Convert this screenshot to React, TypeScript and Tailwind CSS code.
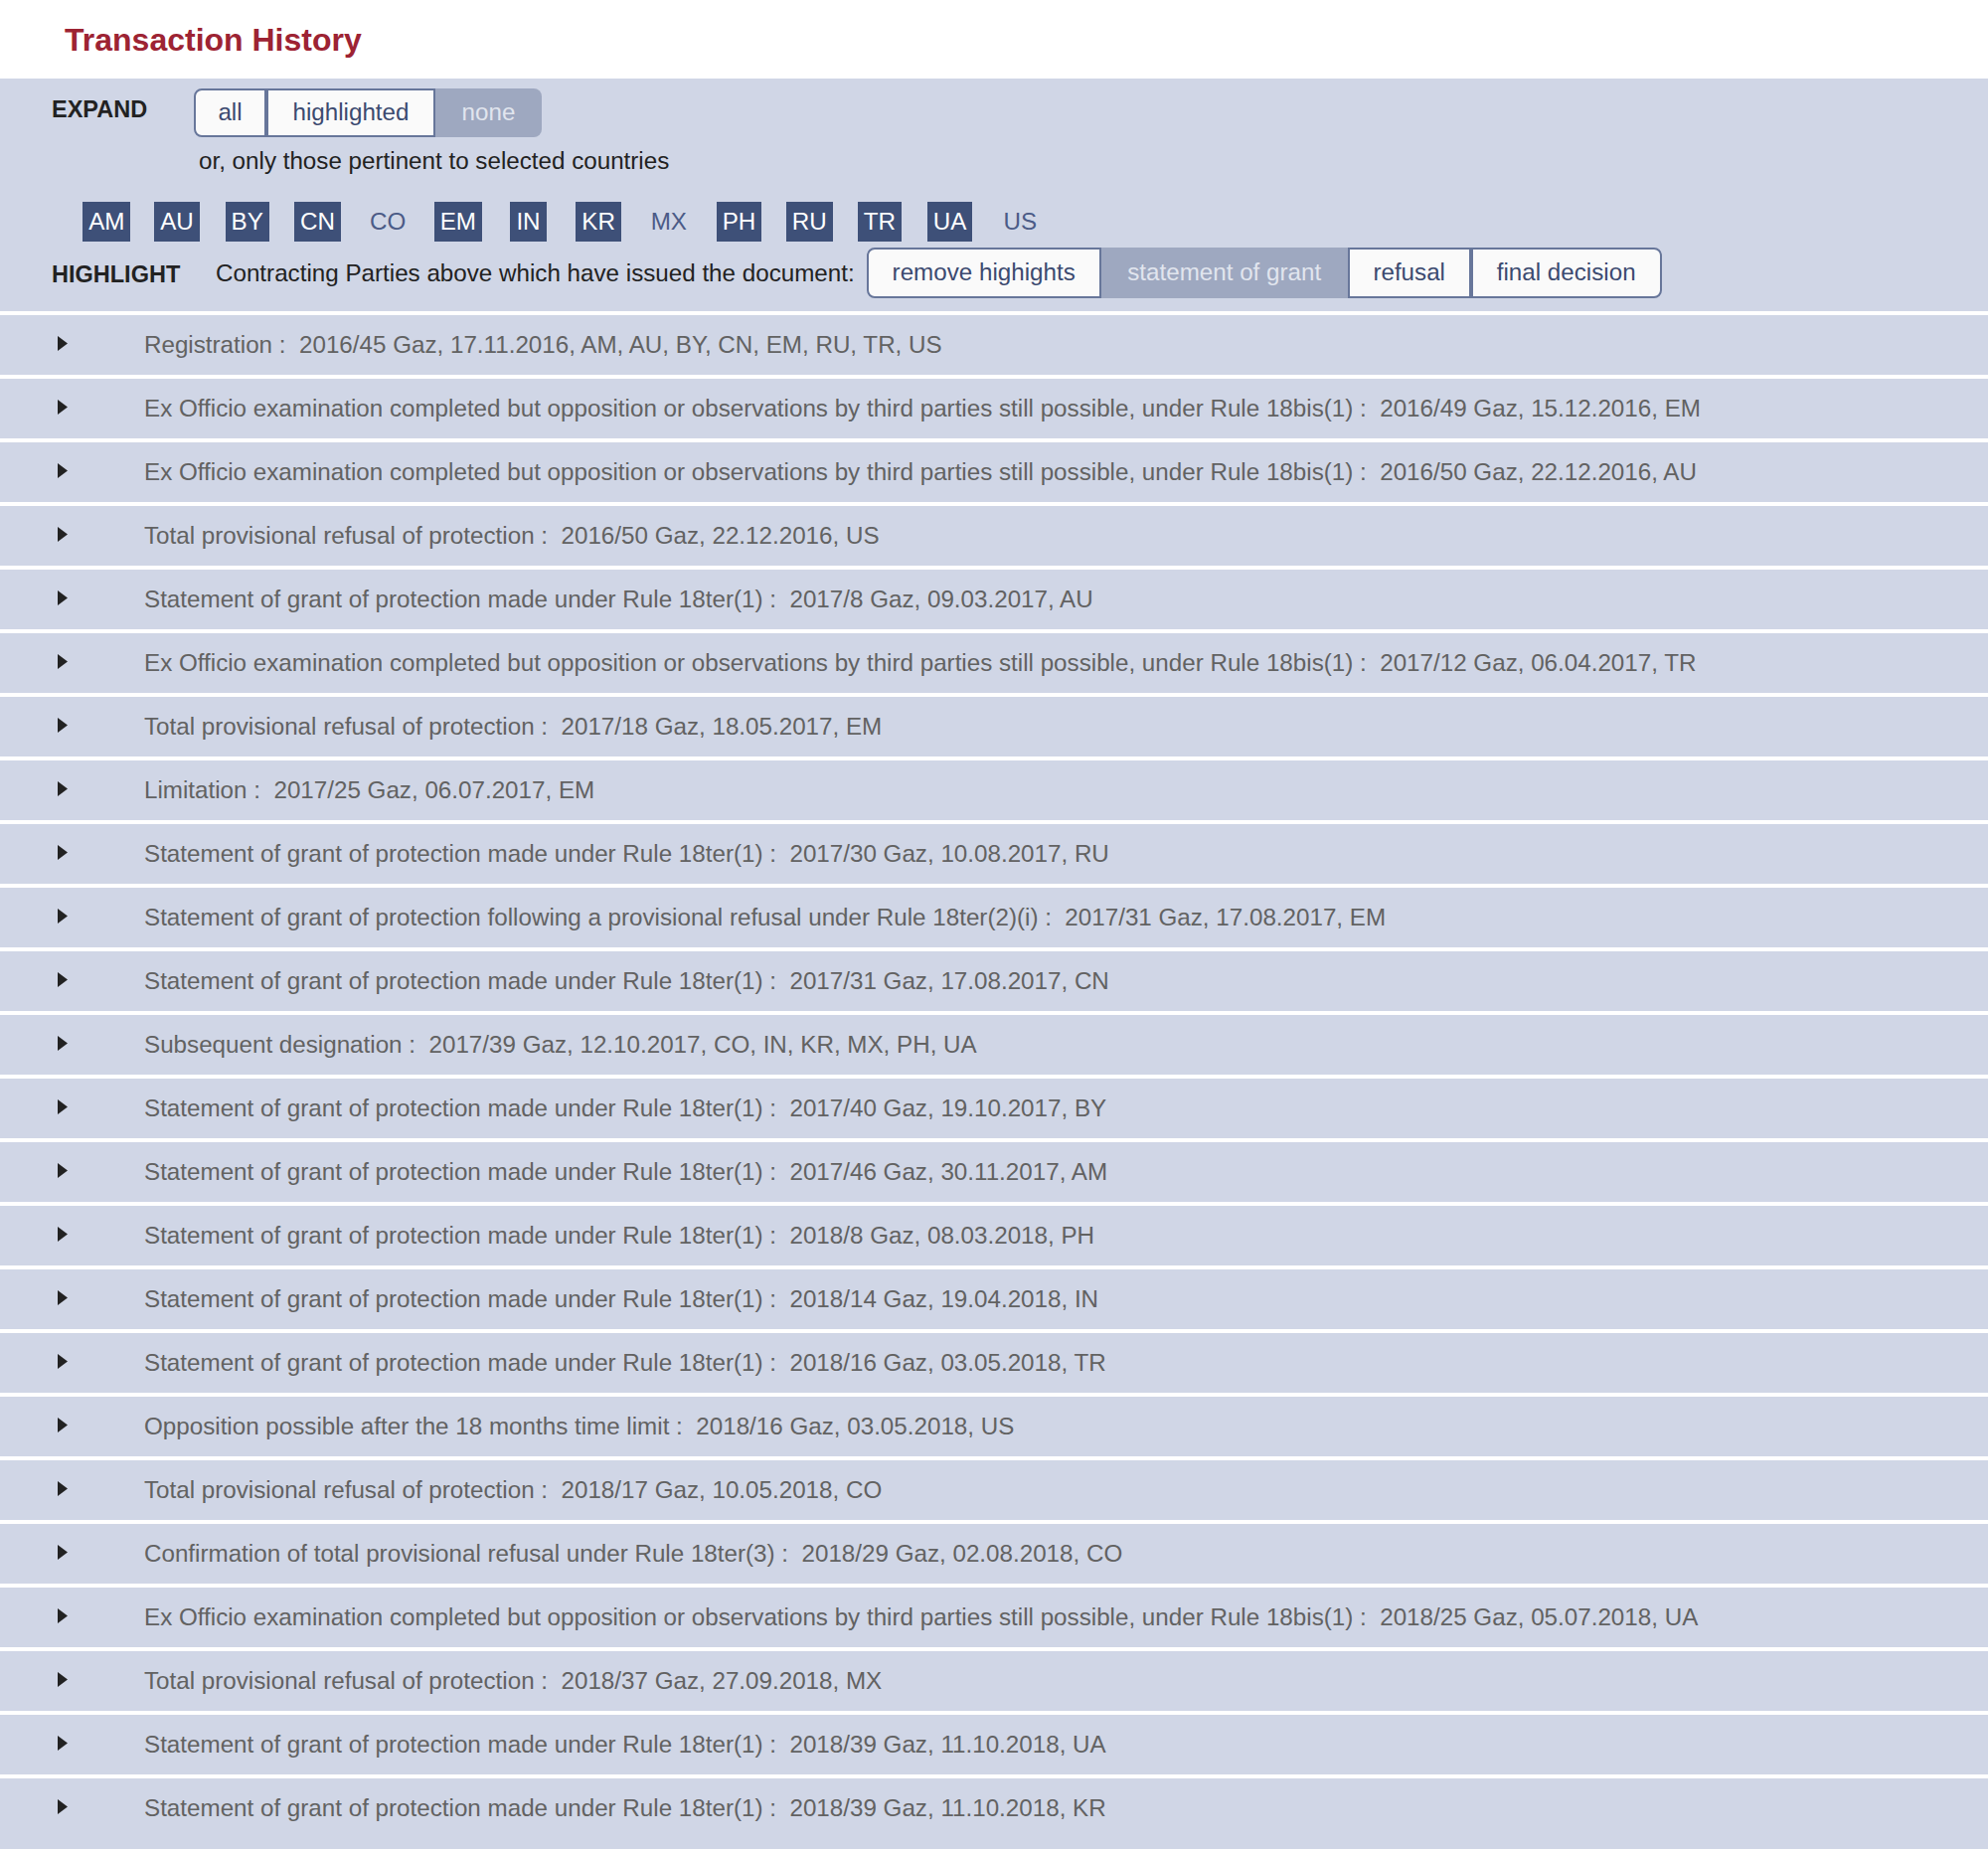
import React from "react";

const countries: { code: string; on: boolean }[] = [
  { code: "AM", on: true },
  { code: "AU", on: true },
  { code: "BY", on: true },
  { code: "CN", on: true },
  { code: "CO", on: false },
  { code: "EM", on: true },
  { code: "IN", on: true },
  { code: "KR", on: true },
  { code: "MX", on: false },
  { code: "PH", on: true },
  { code: "RU", on: true },
  { code: "TR", on: true },
  { code: "UA", on: true },
  { code: "US", on: false },
];

const EXO =
  "Ex Officio examination completed but opposition or observations by third parties still possible, under Rule 18bis(1)";
const SOG = "Statement of grant of protection made under Rule 18ter(1)";
const TPR = "Total provisional refusal of protection";

const rows: [string, string][] = [
  ["Registration", "2016/45 Gaz, 17.11.2016, AM, AU, BY, CN, EM, RU, TR, US"],
  [EXO, "2016/49 Gaz, 15.12.2016, EM"],
  [EXO, "2016/50 Gaz, 22.12.2016, AU"],
  [TPR, "2016/50 Gaz, 22.12.2016, US"],
  [SOG, "2017/8 Gaz, 09.03.2017, AU"],
  [EXO, "2017/12 Gaz, 06.04.2017, TR"],
  [TPR, "2017/18 Gaz, 18.05.2017, EM"],
  ["Limitation", "2017/25 Gaz, 06.07.2017, EM"],
  [SOG, "2017/30 Gaz, 10.08.2017, RU"],
  [
    "Statement of grant of protection following a provisional refusal under Rule 18ter(2)(i)",
    "2017/31 Gaz, 17.08.2017, EM",
  ],
  [SOG, "2017/31 Gaz, 17.08.2017, CN"],
  ["Subsequent designation", "2017/39 Gaz, 12.10.2017, CO, IN, KR, MX, PH, UA"],
  [SOG, "2017/40 Gaz, 19.10.2017, BY"],
  [SOG, "2017/46 Gaz, 30.11.2017, AM"],
  [SOG, "2018/8 Gaz, 08.03.2018, PH"],
  [SOG, "2018/14 Gaz, 19.04.2018, IN"],
  [SOG, "2018/16 Gaz, 03.05.2018, TR"],
  ["Opposition possible after the 18 months time limit", "2018/16 Gaz, 03.05.2018, US"],
  [TPR, "2018/17 Gaz, 10.05.2018, CO"],
  ["Confirmation of total provisional refusal under Rule 18ter(3)", "2018/29 Gaz, 02.08.2018, CO"],
  [EXO, "2018/25 Gaz, 05.07.2018, UA"],
  [TPR, "2018/37 Gaz, 27.09.2018, MX"],
  [SOG, "2018/39 Gaz, 11.10.2018, UA"],
  [SOG, "2018/39 Gaz, 11.10.2018, KR"],
];

function Triangle() {
  return (
    <svg width="10" height="15" viewBox="0 0 10 15" className="block">
      <polygon points="0,0 10,7.5 0,15" fill="#222222" />
    </svg>
  );
}

export default function App() {
  return (
    <div
      className="w-[2000px] min-h-[1860px] bg-white"
      style={{ fontFamily: '"Liberation Sans", Arial, Helvetica, sans-serif' }}
    >
      <div className="h-[79px] flex items-center pl-[65px]">
        <h1 className="text-[32px] leading-none font-bold text-[#9d2333]">Transaction History</h1>
      </div>

      <div className="bg-[#d0d6e6] pt-[10px] pb-[13px]">
        <div className="flex items-start pl-[52px]">
          <div className="w-[143px] mt-[10px] text-[23.5px] leading-none font-bold text-[#222]">EXPAND</div>
          <div className="flex h-[49px] text-[24.2px]">
            <div className="w-[73px] flex items-center justify-center bg-[#fafafa] border-2 border-[#67769a] rounded-l-[8px] text-[#3c4a70]">
              all
            </div>
            <div className="w-[170px] flex items-center justify-center bg-[#fafafa] border-2 border-[#67769a] text-[#3c4a70]">
              highlighted
            </div>
            <div className="w-[107px] flex items-center justify-center bg-[#9ea8c0] rounded-r-[8px] text-[#e1e5ee]">
              none
            </div>
          </div>
        </div>
        <div className="pl-[200px] mt-[10px] text-[24.2px] leading-[28px] text-[#222]">
          or, only those pertinent to selected countries
        </div>
        <div className="flex pl-[72px] mt-[27px]">
          {countries.map((c) => (
            <div key={c.code} className="w-[70.7px] flex justify-center">
              <div
                className={
                  c.on
                    ? "h-[40px] px-[6px] flex items-center bg-[#3e5078] text-white text-[24.2px]"
                    : "h-[40px] px-[6px] flex items-center text-[#4b5b87] text-[24.2px]"
                }
              >
                {c.code}
              </div>
            </div>
          ))}
        </div>
        <div className="flex items-center pl-[52px] mt-[6px]">
          <div className="w-[165px] mt-[4px] text-[23.5px] leading-none font-bold text-[#222]">HIGHLIGHT</div>
          <div className="text-[24.2px] leading-[28px] text-[#222] mr-[12px]">
            Contracting Parties above which have issued the document:
          </div>
          <div className="flex h-[51px] text-[24.2px]">
            <div className="w-[236px] flex items-center justify-center bg-[#fafafa] border-2 border-[#67769a] rounded-l-[8px] text-[#3c4a70]">
              remove highights
            </div>
            <div className="w-[248px] flex items-center justify-center bg-[#9ea8c0] text-[#e1e5ee]">
              statement of grant
            </div>
            <div className="w-[124px] flex items-center justify-center bg-[#fafafa] border-2 border-[#67769a] text-[#3c4a70]">
              refusal
            </div>
            <div className="w-[192px] flex items-center justify-center bg-[#fafafa] border-2 border-[#67769a] rounded-r-[8px] text-[#3c4a70]">
              final decision
            </div>
          </div>
        </div>
      </div>

      <div className="flex flex-col">
        {rows.map(([label, detail], i) => (
          <div key={i} className="mt-[4px] h-[60px] bg-[#d0d6e6] flex items-center">
            <div className="w-[145px] pl-[58px] flex items-center -mt-[3px]">
              <Triangle />
            </div>
            <div className="text-[24.2px] leading-[28px] text-[#626262] whitespace-nowrap">
              {label} :{"\u00a0"} {detail}
            </div>
          </div>
        ))}
        <div className="h-[20px] bg-[#d0d6e6]" />
      </div>
    </div>
  );
}
